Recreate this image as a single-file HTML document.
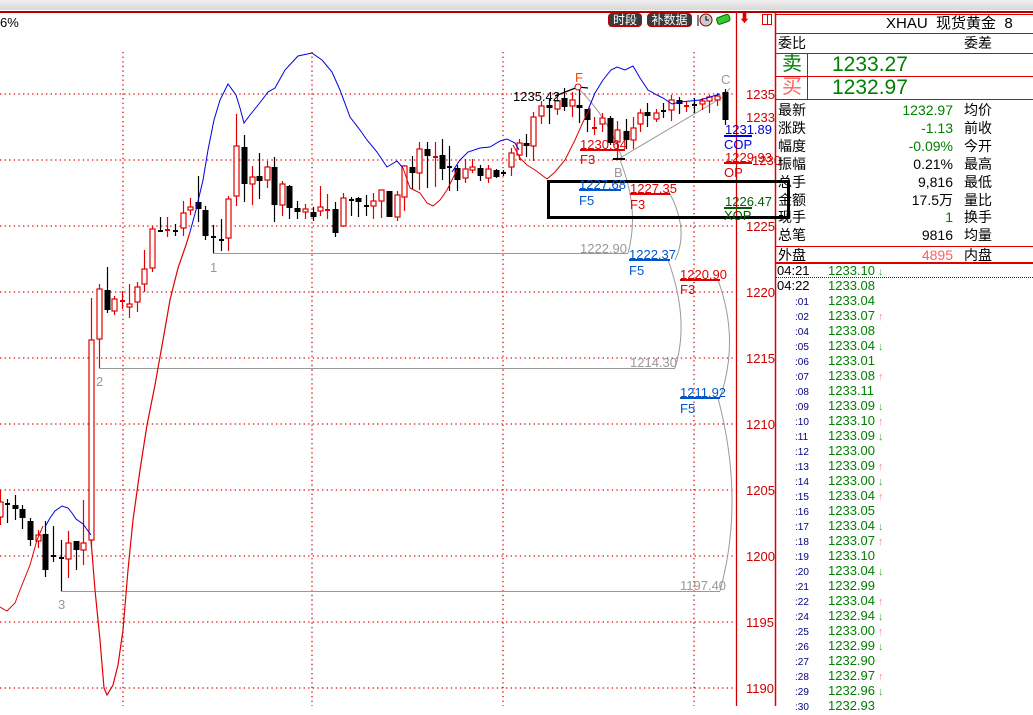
<!DOCTYPE html>
<html><head><meta charset="utf-8">
<style>
*{margin:0;padding:0;box-sizing:border-box}
body{width:1033px;height:706px;overflow:hidden;background:#fff;font-family:"Liberation Sans","Noto Sans CJK SC",sans-serif;position:relative}
.a{position:absolute;white-space:nowrap;line-height:1}
#top{position:absolute;left:0;top:0;width:1033px;height:10px;background:linear-gradient(#f0f0f0,#d8d8d8)}
.btn{position:absolute;top:13px;height:14px;background:#3a3a3a;border:1px solid #c00000;border-radius:4px;color:#fff;font-size:12px;line-height:12px;text-align:center}
.rp{font-size:14px;color:#000}
.tk{font-size:13px}
</style></head><body>
<div id="top"></div>
<div class="a" style="left:0;top:11px;width:1033px;height:2px;background:#b00000"></div>
<svg id="c" width="1033" height="706" style="position:absolute;left:0;top:0" xmlns="http://www.w3.org/2000/svg">
<g stroke="#e00000" stroke-width="1.3" stroke-dasharray="1.3 3.3" fill="none">
<line x1="0" y1="94" x2="736" y2="94"/><line x1="0" y1="160" x2="736" y2="160"/><line x1="0" y1="226" x2="736" y2="226"/>
<line x1="0" y1="292" x2="736" y2="292"/><line x1="0" y1="358" x2="736" y2="358"/><line x1="0" y1="424" x2="736" y2="424"/>
<line x1="0" y1="490" x2="736" y2="490"/><line x1="0" y1="556" x2="736" y2="556"/><line x1="0" y1="622" x2="736" y2="622"/>
<line x1="0" y1="688" x2="736" y2="688"/>
<line x1="123" y1="52" x2="123" y2="706"/><line x1="312" y1="52" x2="312" y2="706"/><line x1="503" y1="52" x2="503" y2="706"/><line x1="694" y1="52" x2="694" y2="706"/>
</g>
<line x1="736.5" y1="12" x2="736.5" y2="706" stroke="#d00000" stroke-width="1.3"/>
<line x1="775.5" y1="12" x2="775.5" y2="706" stroke="#e00000" stroke-width="1.5"/>
<!-- gray level lines -->
<g stroke="#999" stroke-width="1" fill="none">
<line x1="213" y1="253.5" x2="628" y2="253.5"/>
<line x1="99" y1="368.5" x2="675" y2="368.5"/>
<line x1="61" y1="591.5" x2="720" y2="591.5"/>
<path d="M620 158 L723 97"/>
<path d="M578 88 Q610 120 622 158"/>
<path d="M620 160 Q640 210 628 253"/>
<path d="M668 190 Q690 230 675 260"/>
<path d="M668 260 Q690 320 675 368"/>
<path d="M718 280 Q740 340 720 398"/>
<path d="M718 398 Q745 500 720 591"/>
<path d="M723 97 L730 88"/>
</g>
<g id="cd"></g>
<!-- envelope lines -->
<polyline fill="none" stroke="#0000e0" stroke-width="1" points="45,527 50,518 55,511 62,506 68,508 72,513 76,519 83,524 91,535"/>
<polyline fill="none" stroke="#0000e0" stroke-width="1" points="190,232 196,210 203,180 208,150 214,120 220,100 228,84 236,95 240,108 244,123 250,115 262,100 268,92 275,88 285,70 298,56 312,53 322,60 332,72 340,90 350,117 360,130 367,140 377,152 387,167 397,161 403,168"/>
<polyline fill="none" stroke="#0000e0" stroke-width="1" points="452,172 460,160 468,152 480,148 490,147 500,141 507,139 515,143 519,150"/>
<polyline fill="none" stroke="#0000e0" stroke-width="1" points="588,110 595,93 603,80 611,70 617,67 625,70 633,66 640,78 648,90 657,95 663,98 672,104 680,102 700,100 720,94"/>
<polyline fill="none" stroke="#e00000" stroke-width="1" points="0,607 7,611 15,603 20,590 30,565 37,540 43,526"/>
<polyline fill="none" stroke="#e00000" stroke-width="1.2" points="91,540 95,590 100,640 104,688 107,695 113,685 118,665 123,630 128,570 133,520 140,470 147,425 155,385 163,340 170,300 178,268 186,245 190,232"/>
<polyline fill="none" stroke="#e00000" stroke-width="1" points="403,168 410,188 420,193 427,203 433,206 440,200 447,190 452,180 457,170"/>
<polyline fill="none" stroke="#e00000" stroke-width="1" points="513,145 520,158 527,165 535,170 547,179 555,172 565,160 575,140 583,122 590,108"/>
<!-- annotation lines -->
<g stroke-width="2">
<line x1="579" y1="190" x2="621" y2="190" stroke="#0055cc"/>
<line x1="630" y1="194" x2="670" y2="194" stroke="#e00000"/>
<line x1="580" y1="150" x2="625" y2="150" stroke="#e00000"/>
<line x1="629" y1="260" x2="670" y2="260" stroke="#0055cc"/>
<line x1="680" y1="280" x2="720" y2="280" stroke="#e00000"/>
<line x1="680" y1="398" x2="720" y2="398" stroke="#0055cc"/>
<line x1="724" y1="136" x2="752" y2="136" stroke="#0000e0"/>
<line x1="724" y1="163" x2="752" y2="163" stroke="#e00000"/>
<line x1="724" y1="208" x2="752" y2="208" stroke="#006000"/>
</g>
<polyline points="555,96 578,87 588,88" fill="none" stroke="#000" stroke-width="1.3"/>
<circle cx="578" cy="87" r="3" fill="#fff" stroke="#e00000"/>
<line x1="613" y1="159" x2="625" y2="159" stroke="#000" stroke-width="2"/>
<rect x="548.5" y="181.5" width="240" height="36" fill="none" stroke="#000" stroke-width="3"/>
</svg>
<script>
var d=[[0,502,517,490,525,'r'],[7,503,505,499,523,'k'],[15,505,509,495,520,'k'],[22,509,518,505,529,'k'],[30,521,540,518,546,'k'],[38,535,541,530,548,'r'],[45,534,570,521,577,'k'],[53,555,557,526,562,'k'],[61,557,559,540,591,'k'],[68,543,559,531,578,'r'],[76,541,550,541,570,'k'],[83,543,550,500,565,'r'],[91,340,540,298,548,'r'],[99,289,339,284,368,'r'],[107,290,310,267,313,'k'],[114,299,311,296,315,'r'],[122,300,302,291,309,'r'],[129,304,307,284,318,'r'],[137,287,302,282,312,'r'],[144,269,284,250,292,'r'],[152,229,268,226,272,'r'],[160,230,231,217,232,'k'],[167,229,231,217,237,'r'],[175,230,231,224,236,'k'],[183,213,228,201,236,'r'],[190,207,210,198,215,'r'],[198,202,209,176,222,'k'],[205,210,236,206,240,'k'],[213,236,237,225,253,'k'],[221,239,240,219,251,'k'],[228,199,238,196,251,'r'],[236,146,196,114,206,'r'],[244,147,184,135,202,'k'],[252,177,184,166,205,'r'],[259,176,181,153,199,'k'],[267,167,180,161,188,'r'],[274,167,205,157,222,'k'],[282,184,205,181,216,'r'],[289,186,208,185,219,'k'],[297,208,212,201,219,'k'],[305,209,212,204,219,'r'],[313,212,217,207,221,'k'],[320,207,211,186,216,'r'],[327,209,210,194,219,'r'],[335,209,233,202,237,'k'],[343,198,226,193,227,'r'],[351,199,200,197,216,'k'],[358,198,202,197,217,'k'],[366,205,206,195,216,'k'],[373,201,206,193,219,'r'],[381,190,201,190,218,'r'],[389,191,217,191,217,'k'],[397,195,217,191,221,'r'],[404,166,197,165,211,'r'],[412,167,173,156,189,'k'],[419,149,173,142,190,'r'],[427,149,156,142,188,'k'],[435,156,158,142,187,'r'],[442,155,169,139,180,'k'],[449,166,167,146,191,'k'],[457,168,180,165,191,'k'],[465,169,178,159,183,'r'],[472,167,170,159,173,'r'],[480,168,176,165,181,'k'],[488,169,178,165,183,'r'],[496,170,177,169,178,'k'],[503,172,173,170,176,'k'],[511,153,167,148,176,'r'],[519,143,155,139,160,'r'],[526,143,146,134,157,'k'],[533,117,146,112,161,'r'],[541,106,116,101,124,'r'],[549,105,108,99,124,'k'],[557,101,109,94,115,'r'],[564,98,107,88,111,'k'],[572,100,106,92,117,'r'],[579,105,108,87,123,'k'],[587,109,120,109,132,'k'],[594,127,128,117,135,'r'],[602,118,124,113,132,'r'],[610,118,143,116,145,'k'],[617,130,142,121,158,'r'],[626,131,140,119,149,'k'],[633,128,140,117,149,'r'],[640,113,124,109,132,'r'],[647,112,116,103,127,'k'],[656,113,119,109,122,'r'],[663,110,111,103,118,'k'],[671,100,110,95,121,'r'],[679,100,104,97,114,'k'],[686,105,106,102,112,'r'],[694,104,105,98,113,'k'],[702,101,104,98,110,'r'],[709,97,101,95,113,'r'],[717,96,100,93,106,'r'],[725,92,120,89,125,'k']];
var s='';d.forEach(function(c){var x=c[0],col=c[5]=='r'?'#e00000':'#000',h=c[2]-c[1];
s+='<line x1="'+(x+.5)+'" y1="'+c[3]+'" x2="'+(x+.5)+'" y2="'+c[4]+'" stroke="'+col+'" stroke-width="1.2"/>';
if(h<=2){s+='<rect x="'+(x-2)+'" y="'+c[1]+'" width="5" height="2" fill="'+col+'"/>';}
else if(c[5]=='r'){s+='<rect x="'+(x-2)+'" y="'+c[1]+'" width="5" height="'+h+'" fill="#fff" stroke="'+col+'" stroke-width="1.2"/>';}
else{s+='<rect x="'+(x-2.5)+'" y="'+c[1]+'" width="6" height="'+h+'" fill="#000"/>';}});
document.getElementById('cd').innerHTML=s;
</script>
<!-- chart text -->
<div class="a" style="left:0;top:16px;font-size:13px">6%</div>
<div class="a" style="left:513px;top:90px;font-size:13px">1235.42</div>
<div class="a" style="left:575px;top:71px;font-size:13px;color:#e05000">F</div>
<div class="a" style="left:721px;top:73px;font-size:13px;color:#999">C</div>
<div class="a" style="left:614px;top:166px;font-size:13px;color:#999">B</div>
<div class="a" style="left:580px;top:138px;font-size:13px;color:#e00000">1230.64</div>
<div class="a" style="left:580px;top:153px;font-size:13px;color:#e00000">F3</div>
<div class="a" style="left:579px;top:178px;font-size:13px;color:#0055cc">1227.68</div>
<div class="a" style="left:579px;top:194px;font-size:13px;color:#0055cc">F5</div>
<div class="a" style="left:630px;top:182px;font-size:13px;color:#e00000">1227.35</div>
<div class="a" style="left:630px;top:198px;font-size:13px;color:#e00000">F3</div>
<div class="a" style="left:580px;top:242px;font-size:13px;color:#999">1222.90</div>
<div class="a" style="left:629px;top:248px;font-size:13px;color:#0055cc">1222.37</div>
<div class="a" style="left:629px;top:264px;font-size:13px;color:#0055cc">F5</div>
<div class="a" style="left:680px;top:268px;font-size:13px;color:#e00000">1220.90</div>
<div class="a" style="left:680px;top:283px;font-size:13px;color:#e00000">F3</div>
<div class="a" style="left:630px;top:356px;font-size:13px;color:#999">1214.30</div>
<div class="a" style="left:680px;top:386px;font-size:13px;color:#0055cc">1211.92</div>
<div class="a" style="left:680px;top:402px;font-size:13px;color:#0055cc">F5</div>
<div class="a" style="left:680px;top:579px;font-size:13px;color:#999">1197.40</div>
<div class="a" style="left:210px;top:261px;font-size:13px;color:#999">1</div>
<div class="a" style="left:96px;top:375px;font-size:13px;color:#999">2</div>
<div class="a" style="left:58px;top:598px;font-size:13px;color:#999">3</div>
<div class="a" style="left:725px;top:123px;font-size:13px;color:#0000e0">1231.89</div>
<div class="a" style="left:724px;top:138px;font-size:13px;color:#0000e0">COP</div>
<div class="a" style="left:725px;top:151px;font-size:13px;color:#e00000">1229.93</div>
<div class="a" style="left:724px;top:166px;font-size:13px;color:#e00000">OP</div>
<div class="a" style="left:725px;top:195px;font-size:13px;color:#006000">1226.47</div>
<div class="a" style="left:724px;top:209px;font-size:13px;color:#006000">XOP</div>
<!-- axis labels -->
<div class="a" style="left:746px;top:88px;font-size:13px;color:#d00000">1235</div>
<div class="a" style="left:746px;top:111px;font-size:13px;color:#d00000">1233</div>
<div class="a" style="left:752px;top:154px;font-size:13px;color:#d00000">1230</div>
<div class="a" style="left:746px;top:220px;font-size:13px;color:#d00000">1225</div>
<div class="a" style="left:746px;top:286px;font-size:13px;color:#d00000">1220</div>
<div class="a" style="left:746px;top:352px;font-size:13px;color:#d00000">1215</div>
<div class="a" style="left:746px;top:418px;font-size:13px;color:#d00000">1210</div>
<div class="a" style="left:746px;top:484px;font-size:13px;color:#d00000">1205</div>
<div class="a" style="left:746px;top:550px;font-size:13px;color:#d00000">1200</div>
<div class="a" style="left:746px;top:616px;font-size:13px;color:#d00000">1195</div>
<div class="a" style="left:746px;top:682px;font-size:13px;color:#d00000">1190</div>
<!-- toolbar -->
<div class="btn" style="left:608px;width:34px">时段</div>
<div class="btn" style="left:647px;width:45px">补数据</div>
<svg class="a" style="left:697px;top:13px" width="40" height="16"><circle cx="9" cy="7" r="6" fill="#ccc" stroke="#800"/><path d="M9 3V7H12" stroke="#000" fill="none"/><line x1="1" y1="2" x2="1" y2="13" stroke="#000"/><rect x="20" y="3" width="13" height="7" rx="2" fill="#3c3" stroke="#060" transform="rotate(-20 26 7)"/></svg>
<div class="a" style="left:739px;top:14px;color:#e00000;font-size:11px;font-weight:bold">⬇</div>
<div class="a" style="left:762px;top:14px;width:10px;height:11px;border:1px solid #e00000"></div>
<div class="a" style="left:767px;top:14px;width:1px;height:11px;background:#e00000"></div>
<!-- right panel -->
<div class="a" style="left:776px;top:14px;width:257px;height:1px;background:#e00000"></div>
<div class="a rp" style="left:886px;top:16px;font-size:15px">XHAU&nbsp; 现货黄金&nbsp; 8</div>
<div class="a" style="left:776px;top:33px;width:257px;height:1px;background:#e00000"></div>
<div class="a rp" style="left:778px;top:36px">委比</div>
<div class="a rp" style="left:964px;top:36px">委差</div>
<div class="a" style="left:776px;top:53px;width:257px;height:1px;background:#e00000"></div>
<div class="a" style="left:807px;top:53px;width:1px;height:46px;background:#e00000"></div>
<div class="a" style="left:782px;top:54px;font-size:20px;color:#008000">卖</div>
<div class="a" style="left:832px;top:54px;font-size:21px;color:#008000">1233.27</div>
<div class="a" style="left:776px;top:76px;width:257px;height:1px;background:#e00000"></div>
<div class="a" style="left:782px;top:77px;font-size:20px;color:#ff6060">买</div>
<div class="a" style="left:832px;top:77px;font-size:21px;color:#008000">1232.97</div>
<div class="a" style="left:776px;top:99px;width:257px;height:1px;background:#e00000"></div>
<div style="position:absolute;left:778px;top:102px;width:250px;font-size:14px;line-height:17.9px">
<div style="display:flex"><span style="width:80px">最新</span><span style="width:95px;text-align:right;color:#008000">1232.97</span><span style="margin-left:11px">均价</span></div>
<div style="display:flex"><span style="width:80px">涨跌</span><span style="width:95px;text-align:right;color:#008000">-1.13</span><span style="margin-left:11px">前收</span></div>
<div style="display:flex"><span style="width:80px">幅度</span><span style="width:95px;text-align:right;color:#008000">-0.09%</span><span style="margin-left:11px">今开</span></div>
<div style="display:flex"><span style="width:80px">振幅</span><span style="width:95px;text-align:right">0.21%</span><span style="margin-left:11px">最高</span></div>
<div style="display:flex"><span style="width:80px">总手</span><span style="width:95px;text-align:right">9,816</span><span style="margin-left:11px">最低</span></div>
<div style="display:flex"><span style="width:80px">金额</span><span style="width:95px;text-align:right">17.5万</span><span style="margin-left:11px">量比</span></div>
<div style="display:flex"><span style="width:80px">现手</span><span style="width:95px;text-align:right;color:#008000">1</span><span style="margin-left:11px">换手</span></div>
<div style="display:flex"><span style="width:80px">总笔</span><span style="width:95px;text-align:right">9816</span><span style="margin-left:11px">均量</span></div>
</div>
<div class="a" style="left:776px;top:246px;width:257px;height:1px;background:#e00000"></div>
<div class="a rp" style="left:778px;top:248px">外盘</div>
<div class="a rp" style="left:914px;top:248px;width:39px;text-align:right;color:#ff6060">4895</div>
<div class="a rp" style="left:964px;top:248px">内盘</div>
<div class="a" style="left:776px;top:262px;width:257px;height:2px;background:#e00000"></div>
<div class="a" style="left:776px;top:277px;width:257px;border-top:1px dotted #800"></div>
<div id="tl" style="position:absolute;left:777px;top:263px;width:256px;font-size:13px;line-height:15px"></div>
<script>
var t=[['04:21','1233.10','d'],['04:22','1233.08',''],[':01','1233.04',''],[':02','1233.07','u'],[':04','1233.08',''],[':05','1233.04','d'],[':06','1233.01',''],[':07','1233.08','u'],[':08','1233.11',''],[':09','1233.09','d'],[':10','1233.10','u'],[':11','1233.09','d'],[':12','1233.00',''],[':13','1233.09','u'],[':14','1233.00','d'],[':15','1233.04','u'],[':16','1233.05',''],[':17','1233.04','d'],[':18','1233.07','u'],[':19','1233.10',''],[':20','1233.04','d'],[':21','1232.99',''],[':22','1233.04','u'],[':24','1232.94','d'],[':25','1233.00','u'],[':26','1232.99','d'],[':27','1232.90',''],[':28','1232.97','u'],[':29','1232.96','d'],[':30','1232.93','']];
var h='';t.forEach(function(r){var tm=r[0].length>3?'<span style="display:inline-block;width:51px">'+r[0]+'</span>':'<span style="display:inline-block;width:51px;padding-left:18px;font-size:10px;color:#000080">'+r[0]+'</span>';
var ar=r[2]=='d'?'<span style="color:#4a4;font-size:11px"> ↓</span>':r[2]=='u'?'<span style="color:#f88;font-size:11px"> ↑</span>':'';
h+='<div style="height:15px;white-space:nowrap">'+tm+'<span style="color:#008000">'+r[1]+'</span>'+ar+'</div>';});
document.getElementById('tl').innerHTML=h;
</script>
</body></html>
